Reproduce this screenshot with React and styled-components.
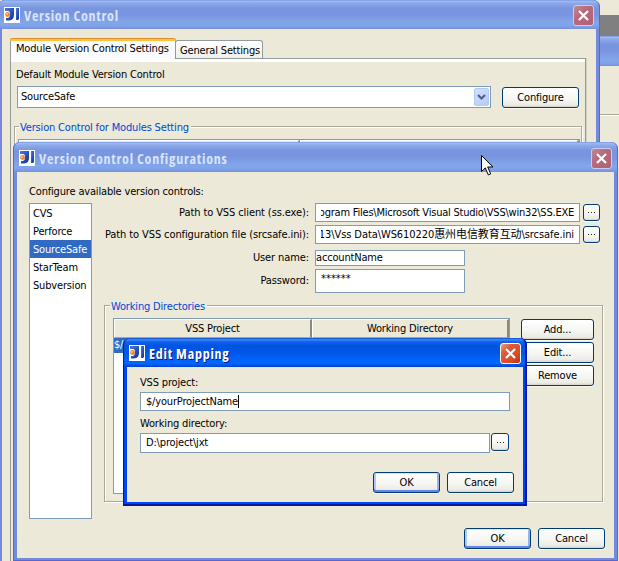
import React, { useState } from "react";
import styled, { createGlobalStyle, css } from "styled-components";

const face = "#ece9d8";
const fieldBorder = "#7f9db9";

const GlobalStyle = createGlobalStyle`
    *, *::before, *::after {
        box-sizing: border-box;
    }
    body {
        margin: 0;
        overflow: hidden;
        background: ${face};
    }
`;

/*the whole screen, windows float on it*/
const Desktop = styled.div`
    position: relative;
    width: 619px;
    height: 561px;
    overflow: hidden;
    background: ${face};
    color: #000;
    font-family: "DejaVu Sans Condensed", "DejaVu Sans", "Noto Sans CJK SC", sans-serif;
    font-stretch: condensed;
    font-size: 11px;
    line-height: 14px;
    letter-spacing: -0.17px;
    white-space: nowrap;
    cursor: default;
`;

/*slice of the application that shows at the right edge*/
const BackApp = styled.div`
    position: absolute;
    top: 0;
    right: 0;
    width: 19px;
    height: 561px;
    display: flex;
    flex-direction: column;
`;

const BackStrip = styled.div`
    height: 21px;
    margin-top: 15px;
    background: #808080;
`;

const inactiveTitle = css`
    background: linear-gradient(
        180deg,
        #7b9ae4 0,
        #9db8ee 5%,
        #8ba8e8 12%,
        #7a95df 28%,
        #7a95df 50%,
        #82a6ea 78%,
        #80a4e9 88%,
        #7890de 100%
    );
`;

const activeTitle = css`
    background: linear-gradient(
        180deg,
        #0848c8 0,
        #3c8cf8 6%,
        #1464ec 12%,
        #0054e3 26%,
        #0056e6 50%,
        #0064fb 75%,
        #0066ff 88%,
        #0040cc 100%
    );
`;

const BackTitle = styled.div`
    height: 30px;
    ${inactiveTitle}
`;

const BackLine = styled.div`
    height: 2px;
    margin-top: 48px;
    border-top: 1px solid #aca899;
    border-bottom: 1px solid #fff;
`;

/*windows*/
const Frame = styled.section`
    position: absolute;
    left: ${(p) => p.$x}px;
    top: ${(p) => p.$y}px;
    width: ${(p) => p.$w}px;
    height: ${(p) => p.$h}px;
    display: flex;
    flex-direction: column;
    border-radius: 7px 7px 0 0;
    border-style: solid;
    border-width: 0 4px ${(p) => (p.$active ? 4 : 3)}px 4px;
    border-color: ${(p) => (p.$active ? "#0046ee" : "#7589dd")};
    background: ${face};

    &::after {
        content: "";
        position: absolute;
        inset: 0 -4px ${(p) => (p.$active ? -4 : -3)}px -4px;
        border-radius: 7px 7px 0 0;
        border: solid ${(p) => (p.$active ? "#0018a4" : "#5b68cb")};
        border-width: 0 ${(p) => (p.$active ? 2 : 1)}px ${(p) => (p.$active ? 2 : 1)}px 1px;
        pointer-events: none;
    }
`;

const TitleBar = styled.header`
    flex: none;
    height: ${(p) => p.$h}px;
    margin: 0 -4px;
    padding: ${(p) => p.$top}px 6px 0 6px;
    display: flex;
    align-items: flex-start;
    border-radius: 7px 7px 0 0;
    ${(p) => (p.$active ? activeTitle : inactiveTitle)}
`;

const TitleText = styled.h1`
    flex: 1;
    margin: 0 0 0 4px;
    font-family: "Open Sans", "Noto Sans", sans-serif;
    font-stretch: condensed;
    font-size: 14px;
    line-height: 18px;
    font-weight: 700;
    letter-spacing: 0.75px;
    color: ${(p) => (p.$active ? "#fff" : "#d8e4f8")};
    ${(p) => p.$active && "text-shadow: 1px 1px 0 #0a1883;"}
`;

const CloseButton = styled.button`
    width: 21px;
    height: 21px;
    margin-top: -2px;
    padding: 0;
    display: flex;
    align-items: center;
    justify-content: center;
    border: 1px solid ${(p) => (p.$active ? "#fff" : "#c6cdf0")};
    border-radius: 3px;
    background: ${(p) =>
        p.$active
            ? "linear-gradient(135deg, #f0a088 0, #e0583a 30%, #dc4a20 70%, #b83410 100%)"
            : "linear-gradient(135deg, #c08898 0, #b86a7a 40%, #b06078 100%)"};
`;

/*content areas*/
const MainBody = styled.div`
    flex: 1;
    display: flex;
    flex-direction: column;
    padding: 9px 10px 0 8px;
`;

const TabStrip = styled.div`
    display: flex;
    align-items: flex-end;
    height: 20px;
`;

const Tab = styled.div`
    position: relative;
    height: ${(p) => (p.$selected ? 21 : 18)}px;
    width: ${(p) => p.$w}px;
    padding: ${(p) => (p.$selected ? "4px 0 0 5px" : "3px 0 0 4px")};
    border: 1px solid #919b9c;
    border-bottom: 0;
    border-radius: 3px 3px 0 0;
    background: linear-gradient(180deg, #fff, #f0f0ea);
    ${(p) =>
        p.$selected
            ? css`
                  z-index: 1;
                  margin-bottom: -1px;
                  border-top: 0;
                  background: #fcfcfe;
                  &::before {
                      content: "";
                      position: absolute;
                      left: -1px;
                      right: -1px;
                      top: 0;
                      height: 3px;
                      border-top: 1px solid #e68b2c;
                      border-radius: 3px 3px 0 0;
                      background: #ffc73c;
                  }
              `
            : css`
                  margin-left: -1px;
              `}
`;

const TabPane = styled.div`
    flex: 1;
    width: 576px;
    padding: 5px 3px 0 3px;
    border: 1px solid #919b9c;
    border-bottom: 0;
    box-shadow: inset 0 3px 0 #fff, 1px 0 0 #d5d2c2;
`;

const PaneLabel = styled.div`
    padding: 4px 0 0 2px;
    margin-bottom: 4px;
`;

const Row = styled.div`
    display: flex;
    gap: ${(p) => p.$gap || 0}px;
    margin-top: ${(p) => p.$mt || 0}px;
    padding: ${(p) => p.$pad || 0};
    justify-content: ${(p) => (p.$end ? "flex-end" : "flex-start")};
    align-items: ${(p) => (p.$bottom ? "flex-end" : "flex-start")};
`;

const Combo = styled.div`
    width: 474px;
    height: 22px;
    padding: 1px 1px 1px 3px;
    display: flex;
    align-items: center;
    justify-content: space-between;
    border: 1px solid ${fieldBorder};
    background: #fff;
`;

const ComboArrow = styled.span`
    width: 15px;
    height: 18px;
    display: flex;
    align-items: center;
    justify-content: center;
    border: 1px solid #b4c8f4;
    border-radius: 2px;
    background: linear-gradient(135deg, #d4e0fc, #b4caf6);
`;

const PushButton = styled.button`
    flex: none;
    width: ${(p) => p.$w || 67}px;
    height: 21px;
    padding: 1px 0 0;
    border: 1px solid #003c74;
    border-radius: 3px;
    background: linear-gradient(180deg, #fff 0, #f5f5f1 60%, #ecebe5 88%, #d9d3c8 100%);
    box-shadow: ${(p) =>
        p.$default
            ? "inset 0 1px 0 #cee7ff, inset 0 -2px 0 #6982ee, inset 2px 0 0 #b0c8f4, inset -2px 0 0 #98b2ee, 0 1px 0 #f8f7f0"
            : "0 1px 0 #f8f7f0"};
    font: inherit;
    color: inherit;
    letter-spacing: inherit;
`;

const BrowseButton = styled(PushButton)`
    width: ${(p) => p.$w || 17}px;
    height: ${(p) => p.$w || 17}px;
    padding: 0;
    display: flex;
    align-items: center;
    justify-content: center;
    gap: 2px;

    i {
        width: 1px;
        height: 1px;
        background: #222;
    }
`;

/*etched box with its caption on the top line*/
const Group = styled.fieldset`
    min-width: 0;
    width: ${(p) => p.$w}px;
    height: ${(p) => p.$h}px;
    margin: ${(p) => p.$m || 0};
    padding: 0;
    border: 1px solid #aca899;
    box-shadow: 1px 1px 0 #fff, inset 1px 1px 0 #fff;
`;

const Caption = styled.div`
    width: max-content;
    margin: -7px 0 0 ${(p) => p.$x}px;
    padding: 1px 2px 0 1px;
    background: ${face};
    color: #0046d5;
`;

const Table = styled.div`
    width: ${(p) => p.$w}px;
    height: ${(p) => p.$h}px;
    border: 1px solid ${fieldBorder};
    background: #fff;
`;

const TableHead = styled.div`
    display: flex;
    height: 19px;
`;

const HeadCell = styled.div`
    width: ${(p) => p.$w}px;
    padding-top: 2px;
    text-align: center;
    border: 1px solid #fff;
    border-width: 1px 2px 1px 1px;
    border-right-color: #8d8978;
    border-bottom-color: #aca899;
    background: ${face};
`;

const SelectedRow = styled.div`
    width: 196px;
    height: 15px;
    background: #316ac5;
    color: #fff;
`;

const ConfigBody = styled.div`
    flex: 1;
    display: flex;
    flex-direction: column;
    padding: 13px 9px 0 12px;
`;

const Split = styled.div`
    display: flex;
    gap: 12px;
    height: 316px;
    margin-top: 4px;
`;

const List = styled.ul`
    flex: none;
    width: 63px;
    margin: 0;
    padding: 0;
    list-style: none;
    border: 1px solid ${fieldBorder};
    background: #fff;
`;

const ListItem = styled.li`
    height: 18px;
    padding: 3px 0 0 3px;
    ${(p) =>
        p.$selected &&
        css`
            background: #316ac5;
            color: #fff;
        `}
`;

const Details = styled.div`
    flex: 1;
`;

const FieldRow = styled.div`
    display: flex;
    align-items: center;
    height: ${(p) => p.$h}px;
    margin-bottom: ${(p) => p.$mb}px;
`;

const FieldLabel = styled.label`
    width: 205px;
    margin-right: 6px;
    display: flex;
    justify-content: flex-end;
    letter-spacing: -0.1px;
`;

const Field = styled.div`
    flex: none;
    width: ${(p) => p.$w}px;
    height: ${(p) => p.$h || 19}px;
    padding: 0 5px;
    display: flex;
    align-items: center;
    border: 1px solid ${fieldBorder};
    background: #fff;
    margin-right: ${(p) => p.$mr || 0}px;
    ${(p) => p.$flush && "padding: 0;"}
    ${(p) => p.$raised && "align-items: flex-start; padding-top: 2px; letter-spacing: 0;"}
`;

/*long paths keep their end in view*/
const PathEnd = styled.span`
    flex: 1;
    min-width: 0;
    display: flex;
    justify-content: flex-end;
    overflow: hidden;
    letter-spacing: ${(p) => p.$ls}px;
`;

const Caret = styled.span`
    width: 1px;
    height: 13px;
    background: #000;
`;

const SideButtons = styled.div`
    display: flex;
    flex-direction: column;
    gap: 2px;
    padding-top: 1px;
`;

const MappingBody = styled.div`
    flex: 1;
    display: flex;
    flex-direction: column;
    padding: 9px 9px 0 13px;
`;

const Pointer = styled.svg`
    position: absolute;
    left: 481px;
    top: 155px;
`;

const AppIcon = () => (
    <svg width="16" height="16" viewBox="0 0 16 16">
        <defs>
            <linearGradient id="ink" x1="0" y1="0" x2="1" y2="1">
                <stop offset="0" stopColor="#4a7cdc" />
                <stop offset="1" stopColor="#0c2f9c" />
            </linearGradient>
        </defs>
        <rect width="16" height="16" fill="#fff" />
        <path d="M1 1h9v7q0 5-5 5.500H2v-2.500h2q2-1 2-4T4 4H1z" fill="url(#ink)" />
        <path d="M12 1h3v11l-1 1h-2z" fill="url(#ink)" />
        <circle cx="3.500" cy="7.500" r="2.400" fill="#e8862c" />
        <circle cx="3" cy="7" r="1" fill="#ffc98c" />
    </svg>
);

const CloseMark = () => (
    <svg width="13" height="13" viewBox="0 0 13 13">
        <path d="M2 2l9 9M11 2l-9 9" stroke="#fff" strokeWidth="2.2" />
    </svg>
);

const TitleRow = ({ title, active, h, top }) => (
    <TitleBar $active={active} $h={h} $top={top}>
        <AppIcon />
        <TitleText $active={active}>{title}</TitleText>
        <CloseButton $active={active} aria-label="Close">
            <CloseMark />
        </CloseButton>
    </TitleBar>
);

const Browse = ({ w }) => (
    <BrowseButton $w={w} aria-label="Browse">
        <i /><i /><i />
    </BrowseButton>
);

const controls = ["CVS", "Perforce", "SourceSafe", "StarTeam", "Subversion"];

export default function App() {
    const [selected, setSelected] = useState("SourceSafe");

    return (
        <Desktop>
            <GlobalStyle />
            <BackApp>
                <BackStrip />
                <BackTitle />
                <BackLine />
            </BackApp>

            <Frame $x={-2} $y={0} $w={602} $h={570}>
                <TitleRow title="Version Control" h={29} top={7} />
                <MainBody>
                    <TabStrip>
                        <Tab $selected $w={166}>Module Version Control Settings</Tab>
                        <Tab $w={88}>General Settings</Tab>
                    </TabStrip>
                    <TabPane>
                        <PaneLabel>Default Module Version Control</PaneLabel>
                        <Row $bottom $gap={11} $pad="0 0 0 3px">
                            <Combo>
                                SourceSafe
                                <ComboArrow>
                                    <svg width="9" height="7" viewBox="0 0 9 7">
                                        <path d="M1 1l3.5 3.5L8 1" fill="none" stroke="#4d6185" strokeWidth="2.2" />
                                    </svg>
                                </ComboArrow>
                            </Combo>
                            <PushButton $w={77}>Configure</PushButton>
                        </Row>
                        <Group $w={568} $h={460} $m="18px 0 0">
                            <Caption $x={4}>Version Control for Modules Setting</Caption>
                            <Row $mt={4} $pad="0 0 0 3px">
                                <Table $w={562} $h={400}>
                                    <TableHead>
                                        <HeadCell $w={281} />
                                        <HeadCell $w={279} />
                                    </TableHead>
                                </Table>
                            </Row>
                        </Group>
                    </TabPane>
                </MainBody>
            </Frame>

            <Frame $x={13} $y={142} $w={605} $h={419}>
                <TitleRow title="Version Control Configurations" h={30} top={8} />
                <ConfigBody>
                    <div>Configure available version controls:</div>
                    <Split>
                        <List>
                            {controls.map((name) => (
                                <ListItem key={name} $selected={name === selected} onClick={() => setSelected(name)}>
                                    {name}
                                </ListItem>
                            ))}
                        </List>
                        <Details>
                            <FieldRow $h={19} $mb={3}>
                                <FieldLabel>Path to VSS client (ss.exe):</FieldLabel>
                                <Field $w={265} $mr={3}>
                                    <PathEnd $ls={-0.22}>ogram Files\Microsoft Visual Studio\VSS\win32\SS.EXE</PathEnd>
                                </Field>
                                <Browse />
                            </FieldRow>
                            <FieldRow $h={19} $mb={6}>
                                <FieldLabel>Path to VSS configuration file (srcsafe.ini):</FieldLabel>
                                <Field $w={265} $mr={3}>
                                    <PathEnd $ls={-0.08}>13\Vss Data\WS610220惠州电信教育互动\srcsafe.ini</PathEnd>
                                </Field>
                                <Browse />
                            </FieldRow>
                            <FieldRow $h={16} $mb={3}>
                                <FieldLabel>User name:</FieldLabel>
                                <Field $w={150} $h={16} $flush>accountName</Field>
                            </FieldRow>
                            <FieldRow $h={24} $mb={12}>
                                <FieldLabel>Password:</FieldLabel>
                                <Field $w={150} $h={24} $raised>******</Field>
                            </FieldRow>
                            <Group $w={499} $h={197}>
                                <Caption $x={5}>Working Directories</Caption>
                                <Row $gap={11} $mt={4} $pad="0 0 0 8px">
                                    <Table $w={397} $h={176}>
                                        <TableHead>
                                            <HeadCell $w={198}>VSS Project</HeadCell>
                                            <HeadCell $w={197}>Working Directory</HeadCell>
                                        </TableHead>
                                        <SelectedRow>$/</SelectedRow>
                                    </Table>
                                    <SideButtons>
                                        <PushButton $w={73}>Add...</PushButton>
                                        <PushButton $w={73}>Edit...</PushButton>
                                        <PushButton $w={73}>Remove</PushButton>
                                    </SideButtons>
                                </Row>
                            </Group>
                        </Details>
                    </Split>
                    <Row $gap={7} $mt={9} $end>
                        <PushButton $default>OK</PushButton>
                        <PushButton>Cancel</PushButton>
                    </Row>
                </ConfigBody>
            </Frame>

            <Frame $active $x={123} $y={338} $w={404} $h={168}>
                <TitleRow active title="Edit Mapping" h={29} top={7} />
                <MappingBody>
                    <div>VSS project:</div>
                    <Row $mt={2}>
                        <Field $w={370}>
                            $/yourProjectName
                            <Caret />
                        </Field>
                    </Row>
                    <Row $mt={6}>Working directory:</Row>
                    <Row $mt={2}>
                        <Field $w={350} $h={20} $mr={1}>D:\project\jxt</Field>
                        <Browse w={18} />
                    </Row>
                    <Row $gap={7} $mt={19} $end>
                        <PushButton $default>OK</PushButton>
                        <PushButton>Cancel</PushButton>
                    </Row>
                </MappingBody>
            </Frame>

            <Pointer width="13" height="22" viewBox="0 0 13 22">
                <path
                    d="M.5 .5v16l3.8-3.6 3 7 2.4-1-3-6.9h5.2z"
                    fill="#fff"
                    stroke="#000"
                />
            </Pointer>
        </Desktop>
    );
}
